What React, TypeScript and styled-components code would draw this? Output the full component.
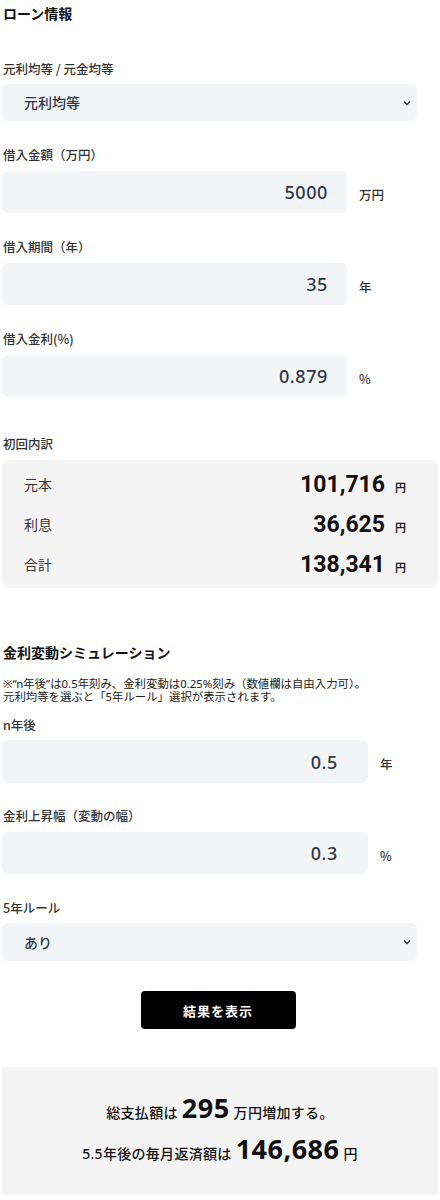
import React from 'react';
import styled, { createGlobalStyle } from 'styled-components';

const GlobalStyle = createGlobalStyle`
  html, body {
    margin: 0;
    padding: 0;
    background: #fff;
  }
  body {
    font-family: "Noto Sans", "Noto Sans CJK JP", sans-serif;
    color: #222;
  }
`;

const Page = styled.div`
  width: 440px;
  padding: 3px 2px 0;
  box-sizing: border-box;
`;

const SectionTitle = styled.h2<{ $top?: number }>`
  margin: ${(p) => p.$top ?? 0}px 0 0 1px;
  font-size: 14px;
  line-height: 22px;
  font-weight: 700;
  color: #111;
`;

const Field = styled.div<{ $top?: number }>`
  margin-top: ${(p) => p.$top ?? 25}px;
`;

const Label = styled.div<{ $gap?: number }>`
  font-family: "Noto Sans CJK JP", sans-serif;
  font-size: 12.5px;
  line-height: 18px;
  font-weight: 500;
  color: #333;
  margin: 0 0 ${(p) => p.$gap ?? 7}px 1px;
`;

const SelectWrap = styled.div`
  position: relative;
  width: 415px;
`;

const Select = styled.select<{ $h: number }>`
  appearance: none;
  -webkit-appearance: none;
  display: block;
  width: 100%;
  height: ${(p) => p.$h}px;
  border: none;
  outline: none;
  border-radius: 6px;
  background: #f3f4f6;
  padding: 0 30px 0 22px;
  font-family: "Noto Sans", "Noto Sans CJK JP", sans-serif;
  font-size: 14px;
  font-weight: 500;
  color: #2d3748;
`;

const Chevron = styled.svg`
  position: absolute;
  right: 6px;
  top: 50%;
  margin-top: -3px;
  width: 8px;
  height: 6px;
  pointer-events: none;
`;

const InputRow = styled.div`
  display: flex;
  align-items: center;
  gap: 12px;
`;

const NumberBox = styled.input<{ $w: number; $h: number; $pr: number }>`
  display: block;
  width: ${(p) => p.$w}px;
  height: ${(p) => p.$h}px;
  box-sizing: border-box;
  border: none;
  outline: none;
  border-radius: 6px;
  background: #f3f4f6;
  padding: 0 ${(p) => p.$pr}px 0 12px;
  text-align: right;
  font-family: "Noto Sans", "Noto Sans CJK JP", sans-serif;
  font-size: 18px;
  font-weight: 500;
  letter-spacing: 0.6px;
  color: #2d3748;
`;

const Unit = styled.span`
  font-family: "Noto Sans CJK JP", sans-serif;
  font-size: 12.5px;
  font-weight: 500;
  color: #333;
  margin-top: 4px;
`;

const BreakdownCard = styled.div`
  width: 436px;
  box-sizing: border-box;
  background: #f4f4f4;
  border-radius: 8px;
  padding: 4px 32px 4px 22px;
`;

const BreakdownRow = styled.div`
  display: flex;
  align-items: center;
  height: 40px;
`;

const RowLabel = styled.span`
  flex: 1;
  font-size: 14px;
  color: #333;
`;

const RowValue = styled.span`
  font-family: Roboto, "Noto Sans", sans-serif;
  font-size: 23px;
  font-weight: 700;
  letter-spacing: 0;
  color: #111;
`;

const Yen = styled.span`
  font-size: 11px;
  font-weight: 700;
  color: #222;
  margin: 5px 0 0 10px;
`;

const Note = styled.p`
  margin: 13px 0 0 1px;
  font-size: 11.4px;
  line-height: 13px;
  color: #222;
`;

const ButtonArea = styled.div`
  display: flex;
  justify-content: center;
  margin-top: 30px;
`;

const ShowButton = styled.button`
  width: 155px;
  height: 38px;
  border: none;
  border-radius: 4px;
  background: #000;
  color: #fff;
  font-family: "Noto Sans", "Noto Sans CJK JP", sans-serif;
  font-size: 13px;
  font-weight: 700;
  letter-spacing: 1px;
  margin-right: 4px;
`;

const ResultBox = styled.div`
  margin-top: 38px;
  width: 436px;
  height: 128px;
  box-sizing: border-box;
  background: #f4f4f4;
  display: flex;
  flex-direction: column;
  align-items: center;
  padding-top: 27px;
  gap: 5px;
`;

const ResultLine = styled.div`
  font-size: 14px;
  font-weight: 500;
  color: #111;
  height: 36px;
  line-height: 36px;
  letter-spacing: 0.3px;
`;

const Big = styled.span`
  font-size: 27px;
  line-height: 1;
  font-weight: 700;
  margin: 0 4px;
  letter-spacing: 0.5px;
`;

type NumFieldProps = {
  label: string;
  value: string;
  unit: string;
  width: number;
  height: number;
  padRight: number;
  top?: number;
  gap?: number;
};

const NumField: React.FC<NumFieldProps> = ({ label, value, unit, width, height, padRight, top, gap }) => (
  <Field $top={top}>
    <Label $gap={gap}>{label}</Label>
    <InputRow>
      <NumberBox $w={width} $h={height} $pr={padRight} defaultValue={value} />
      <Unit>{unit}</Unit>
    </InputRow>
  </Field>
);

const SelectField: React.FC<{ label: string; options: string[]; height: number; top?: number }> = ({
  label,
  options,
  height,
  top,
}) => (
  <Field $top={top}>
    <Label $gap={6}>{label}</Label>
    <SelectWrap>
      <Select $h={height} defaultValue={options[0]}>
        {options.map((o) => (
          <option key={o}>{o}</option>
        ))}
      </Select>
      <Chevron viewBox="0 0 8 6">
        <path d="M1 1.5 L4 4.5 L7 1.5" fill="none" stroke="#333" strokeWidth="1.3" />
      </Chevron>
    </SelectWrap>
  </Field>
);

const breakdown = [
  { label: '元本', value: '101,716' },
  { label: '利息', value: '36,625' },
  { label: '合計', value: '138,341' },
];

const App: React.FC = () => (
  <>
    <GlobalStyle />
    <Page>
      <SectionTitle>ローン情報</SectionTitle>

      <SelectField label="元利均等 / 元金均等" options={['元利均等', '元金均等']} height={37} top={35} />
      <NumField label="借入金額（万円）" value="5000" unit="万円" width={345} height={42} padRight={19} />
      <NumField label="借入期間（年）" value="35" unit="年" width={345} height={42} padRight={19} />
      <NumField label="借入金利(%)" value="0.879" unit="%" width={345} height={42} padRight={19} />

      <Field $top={38}>
        <Label>初回内訳</Label>
        <BreakdownCard>
          {breakdown.map((r) => (
            <BreakdownRow key={r.label}>
              <RowLabel>{r.label}</RowLabel>
              <RowValue>{r.value}</RowValue>
              <Yen>円</Yen>
            </BreakdownRow>
          ))}
        </BreakdownCard>
      </Field>

      <SectionTitle $top={54}>金利変動シミュレーション</SectionTitle>
      <Note>
        ※“n年後”は0.5年刻み、金利変動は0.25%刻み（数値欄は自由入力可）。
        <br />
        元利均等を選ぶと「5年ルール」選択が表示されます。
      </Note>

      <NumField label="n年後" value="0.5" unit="年" width={366} height={43} padRight={30} top={13} gap={6} />
      <NumField label="金利上昇幅（変動の幅）" value="0.3" unit="%" width={366} height={42} padRight={30} top={24} />
      <SelectField label="5年ルール" options={['あり', 'なし']} height={38} top={25} />

      <ButtonArea>
        <ShowButton>結果を表示</ShowButton>
      </ButtonArea>

      <ResultBox>
        <ResultLine>
          総支払額は<Big>295</Big>万円増加する。
        </ResultLine>
        <ResultLine>
          5.5年後の毎月返済額は<Big>146,686</Big>円
        </ResultLine>
      </ResultBox>
    </Page>
  </>
);

export default App;
